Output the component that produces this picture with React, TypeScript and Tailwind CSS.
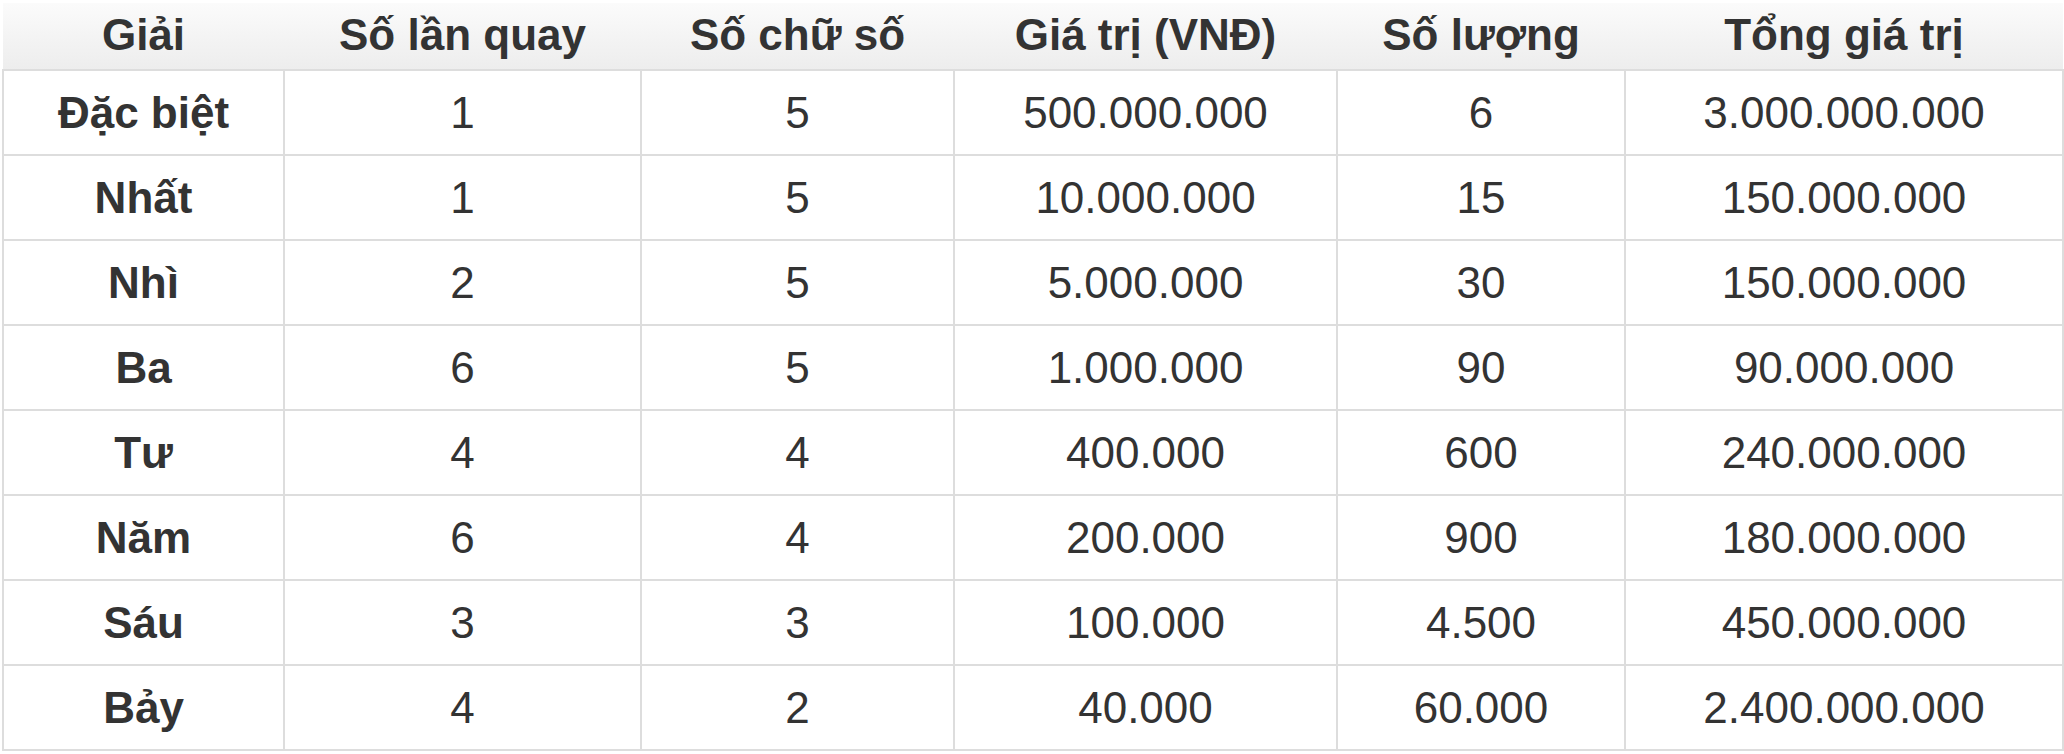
import * as React from "react";

const headers = ["Giải", "Số lần quay", "Số chữ số", "Giá trị (VNĐ)", "Số lượng", "Tổng giá trị"];

const rows = [
    ["Đặc biệt", "1", "5", "500.000.000", "6", "3.000.000.000"],
    ["Nhất", "1", "5", "10.000.000", "15", "150.000.000"],
    ["Nhì", "2", "5", "5.000.000", "30", "150.000.000"],
    ["Ba", "6", "5", "1.000.000", "90", "90.000.000"],
    ["Tư", "4", "4", "400.000", "600", "240.000.000"],
    ["Năm", "6", "4", "200.000", "900", "180.000.000"],
    ["Sáu", "3", "3", "100.000", "4.500", "450.000.000"],
    ["Bảy", "4", "2", "40.000", "60.000", "2.400.000.000"],
];

const widths = ["w-[281px]", "w-[357px]", "w-[313px]", "w-[383px]", "w-[288px]", "w-[438px]"];

export default function App() {
    return (
        <div className="w-[2064px] h-[754px] bg-white pt-[3px] pl-[2px] font-[family-name:Liberation_Sans,Arial,sans-serif] text-[#333333]">
            <table className="w-[2060px] table-fixed border-collapse text-[44px] leading-none">
                <colgroup>
                    {widths.map((w, i) => <col key={i} className={w}/>)}
                </colgroup>
                <thead>
                <tr className="h-[67px] bg-gradient-to-b from-[#fbfbfb] to-[#ededed]">
                    {headers.map((h) => (
                        <th key={h} className="font-bold text-center align-middle border-b-2 border-[#dddddd] pb-[3px]">
                            {h}
                        </th>
                    ))}
                </tr>
                </thead>
                <tbody>
                {rows.map((r) => (
                    <tr key={r[0]} className="h-[85px]">
                        {r.map((c, i) => (
                            <td key={i}
                                className={"text-center align-middle border-2 border-[#dddddd] " + (i === 0 ? "font-bold" : "font-normal")}>
                                {c}
                            </td>
                        ))}
                    </tr>
                ))}
                </tbody>
            </table>
        </div>
    )
}
